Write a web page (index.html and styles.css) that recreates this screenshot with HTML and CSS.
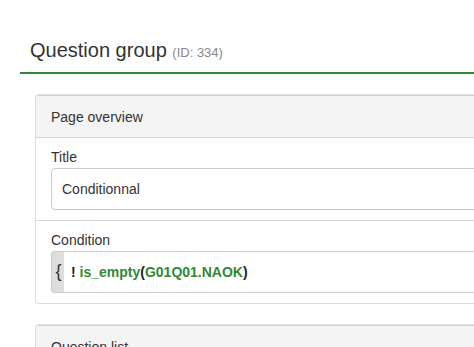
FILE: index.html
```html
<!DOCTYPE html>
<html lang="en">
<head>
  <meta charset="UTF-8">
  <title>Question group</title>
  <link rel="stylesheet" href="styles.css">
</head>
<body>

  <div class="page">
    <div class="page-header">
      <h1>Question group <small>(ID: 334)</small></h1>
    </div>

    <div class="panel">
      <div class="panel-heading">Page overview</div>
      <div class="panel-row">
        <label>Title</label>
        <div class="form-control">Conditionnal</div>
      </div>
      <div class="panel-row">
        <label>Condition</label>
        <div class="input-group">
          <span class="addon">{</span>
          <div class="form-control expr">
            <span>!</span> <span class="em-fn">is_empty</span>(<span class="em-var">G01Q01.NAOK</span>)
          </div>
        </div>
      </div>
    </div>

    <div class="panel">
      <div class="panel-heading">Question list</div>
      <div class="panel-row">
        <label>Questions</label>
      </div>
    </div>
  </div>

</body>
</html>
```

FILE: styles.css
```css
html, body {
  margin: 0;
  padding: 0;
  overflow: hidden;
  background: #fff;
}

body {
  font-family: "Liberation Sans", Arial, sans-serif;
  font-size: 14px;
  line-height: 20px;
  color: #333;
}

.page {
  width: 760px;
  margin-left: 20px;
}

.page-header {
  padding: 36px 0 8px 10px;
  border-bottom: 2px solid #328637;
}

.page-header h1 {
  margin: 0;
  font-size: 20px;
  font-weight: normal;
  line-height: 28px;
  color: #333;
}

.page-header small {
  font-size: 13px;
  line-height: 1;
  color: #888;
}

.panel {
  margin: 21px 0 21px 15px;
  border: 1px solid #dcdcdc;
  border-top-color: #d2d2d2;
  border-radius: 4px;
  box-shadow: 0 -1px 0 #e2e2e2;
  overflow: hidden;
}

.panel-heading {
  padding: 11px 15px 10px;
  background: #f4f4f4;
  border-bottom: 1px solid #d6d6d6;
}

.panel-row {
  padding: 9px 15px 10px;
  border-bottom: 1px solid #d6d6d6;
}

.panel-row:last-child {
  border-bottom: none;
}

label {
  display: block;
  margin-bottom: 1px;
}

.form-control {
  height: 40px;
  line-height: 40px;
  padding: 0 10px;
  border: 1px solid #ccc;
  border-radius: 4px;
  color: #333;
}

.input-group {
  display: flex;
}

.addon {
  width: 11px;
  height: 40px;
  line-height: 38px;
  padding-left: 1px;
  border: 1px solid #ccc;
  border-right: none;
  border-radius: 4px 0 0 4px;
  background: #dedede;
  font-family: "Liberation Sans", sans-serif;
  font-size: 18px;
  color: #333;
  text-align: center;
}

.expr {
  flex: 1;
  padding-left: 7px;
  border-left: none;
  border-radius: 0 4px 4px 0;
  font-weight: bold;
  color: #222;
}

.em-fn,
.em-var {
  color: #2f8a32;
}
```
